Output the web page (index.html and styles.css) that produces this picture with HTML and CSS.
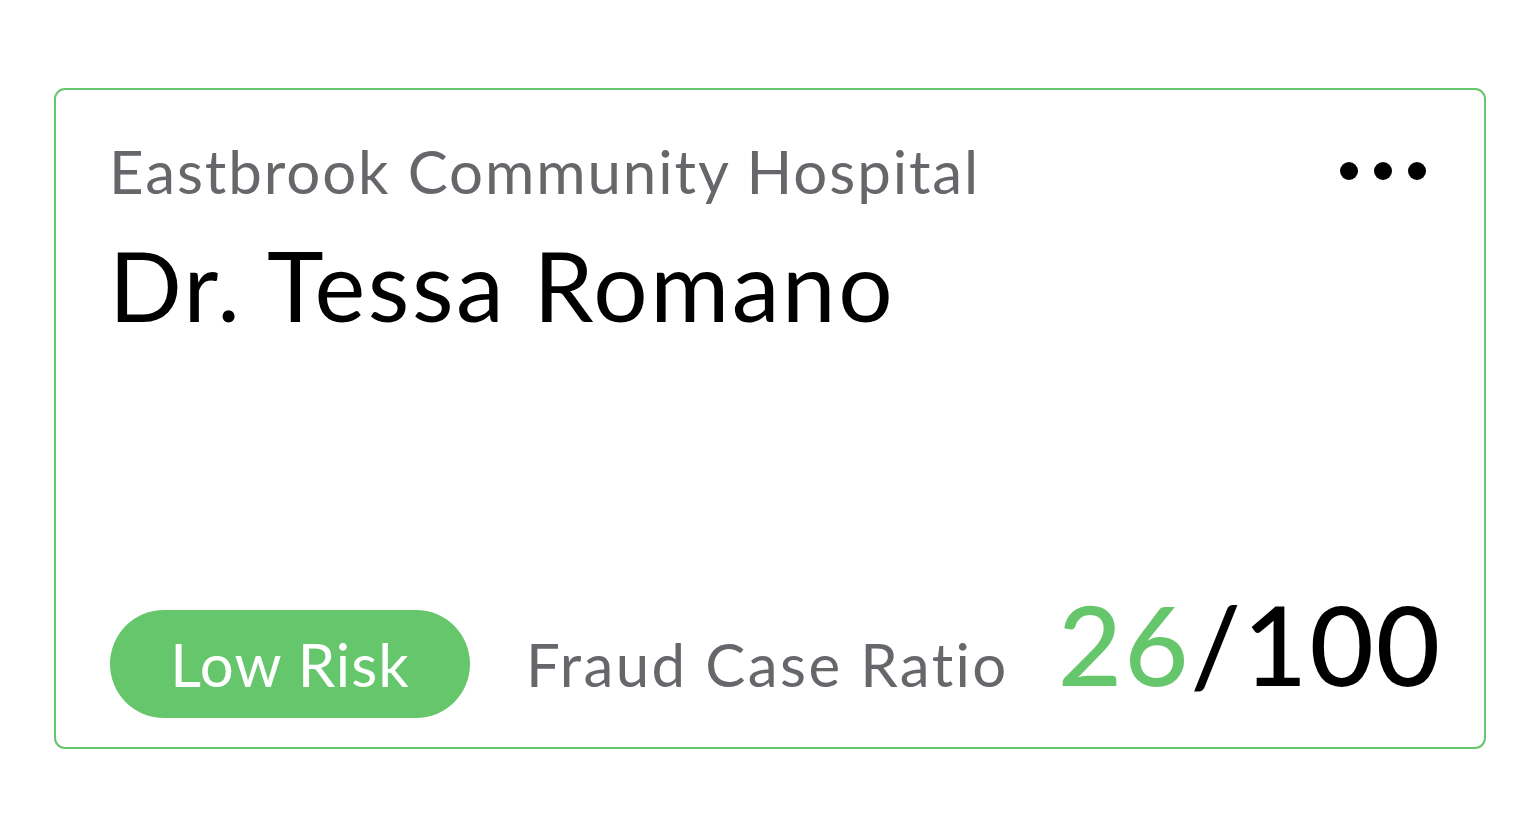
FILE: index.html
```html
<!DOCTYPE html>
<html lang="en">
<head>
    <meta charset="UTF-8">
    <meta name="viewport" content="width=device-width, initial-scale=1.0">
    <title>Provider Risk Card</title>
    <link rel="stylesheet" href="styles.css">
</head>
<body>
    <div class="card">
        <div class="card-header">
            <div class="hospital">Eastbrook Community Hospital</div>
            <button class="more-btn" aria-label="More options">
                <svg width="88" height="20" viewBox="0 0 88 20">
                    <circle cx="10" cy="10" r="9" fill="#000"/>
                    <circle cx="44" cy="10" r="9" fill="#000"/>
                    <circle cx="78" cy="10" r="9" fill="#000"/>
                </svg>
            </button>
        </div>
        <h1 class="doctor">Dr. Tessa Romano</h1>

        <div class="card-footer">
            <span class="risk-pill">Low Risk</span>
            <span class="ratio-label">Fraud Case Ratio</span>
            <span class="ratio-value"><span class="ratio-num">26</span>/100</span>
        </div>
    </div>
</body>
</html>
```

FILE: styles.css
```css
* { box-sizing: border-box; }
body { margin: 0; padding: 88px 54px 0 54px; background: #fff; font-family: 'Lato', 'Noto Sans', sans-serif; color: #000; }
.card { height: 661px; border: 2px solid #66c66c; border-radius: 11px; padding: 40px 40px 8px 53px; display: flex; flex-direction: column; }
.card-header { display: flex; justify-content: space-between; align-items: center; }
.hospital { font-size: 60px; color: #66666b; line-height: 82px; letter-spacing: 1.9px; white-space: nowrap; }
.more-btn { background: none; border: none; padding: 0; cursor: pointer; display: flex; margin-top: 0; margin-right: 17px; }
.doctor { margin: 18px 0 0; font-size: 96px; font-weight: 400; line-height: 110px; letter-spacing: 2.6px; }
.card-footer { margin-top: auto; display: flex; align-items: center; gap: 56px; white-space: nowrap; }
.risk-pill { flex-shrink: 0; background: #66c66c; color: #fff; font-size: 60px; height: 108px; width: 360px; border-radius: 54px; display: flex; align-items: center; justify-content: center; letter-spacing: 1px; margin-left: 1px; }
.ratio-label { font-size: 60px; color: #66666b; letter-spacing: 2.4px; }
.ratio-value { font-size: 111px; font-weight: 500; line-height: 108px; margin-bottom: 42px; margin-left: -7px; letter-spacing: 2px; }
.ratio-num { color: #66c66c; }
```
